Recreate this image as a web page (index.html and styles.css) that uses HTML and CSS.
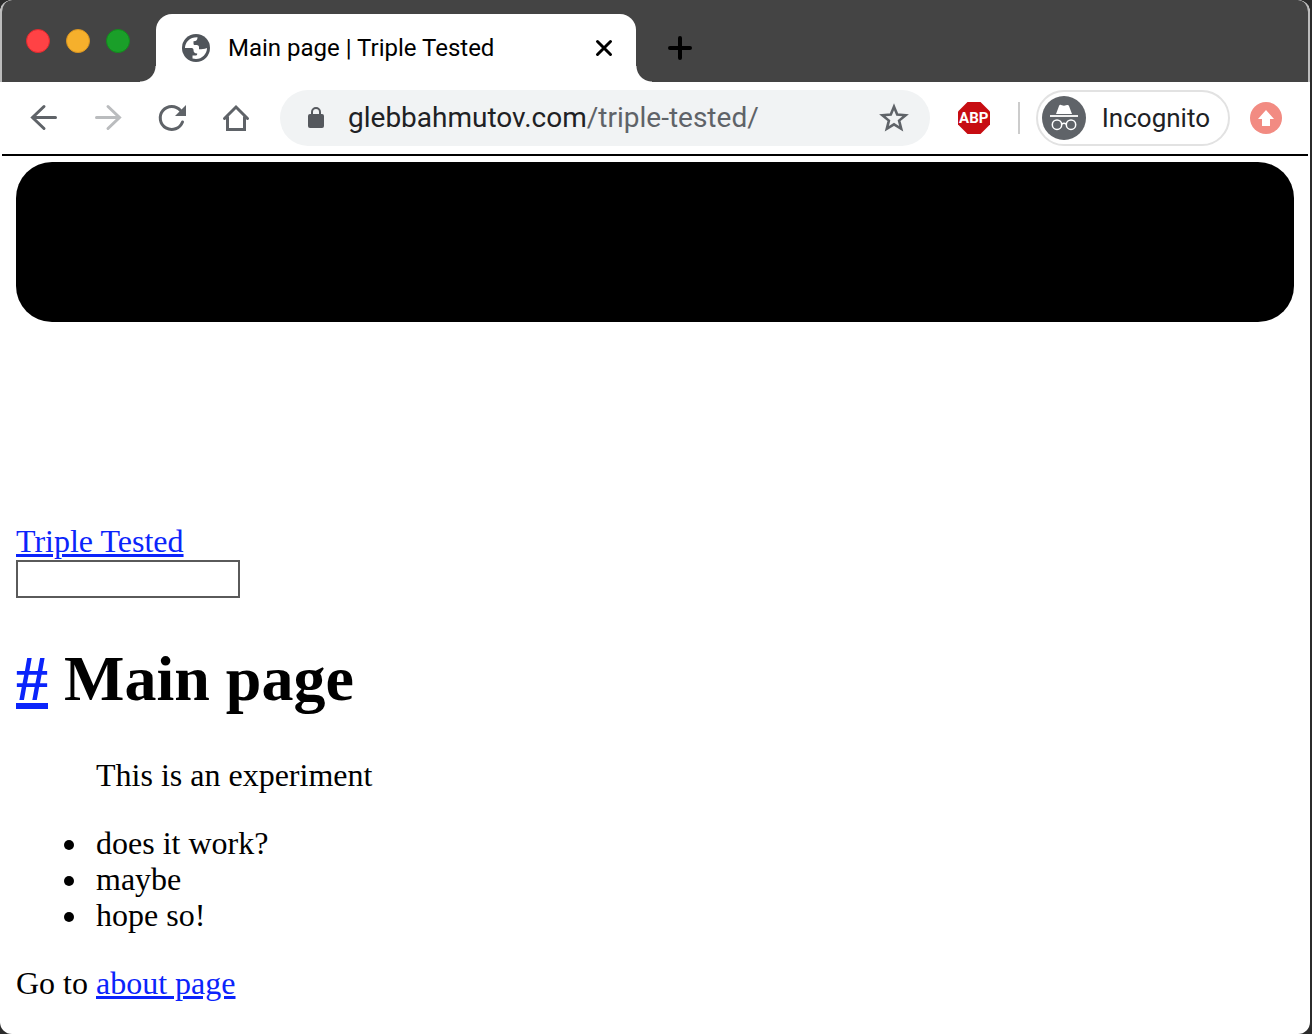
FILE: index.html
```html
<!DOCTYPE html>
<html lang="en">
<head>
<meta charset="utf-8">
<title>Main page | Triple Tested</title>
<link rel="stylesheet" href="styles.css">
</head>
<body>
<div class="window">
  <header class="tab-strip">
    <div class="lights">
      <button class="light light-close" aria-label="Close window"></button>
      <button class="light light-minimize" aria-label="Minimize window"></button>
      <button class="light light-zoom" aria-label="Zoom window"></button>
    </div>
    <div class="tab">
      <svg class="favicon" viewBox="0 0 28 28" aria-hidden="true">
        <circle cx="14" cy="14" r="14" fill="#50555b"/>
        <path fill="#fff" d="M3 14C3 8 8 3 15.500 3.200C15.500 6 14.500 7 11.500 7.300V9.500C11.500 10.500 12 11 13 11H14.500C16.500 11 17 12 17 13.500V15.200C20 15.200 22 15.200 25 14C25 20 20 25 14 25L10.500 24.500V21.500H14C15 21.500 15.200 20.500 15.200 19.500C12.500 19.500 11.500 18 11.500 16C11.500 14.500 10.500 14 9 14Z"/>
      </svg>
      <span class="tab-title">Main page | Triple Tested</span>
      <button class="tab-close" aria-label="Close tab">
        <svg viewBox="0 0 20 20"><path d="M3.500 3.500l13 13m0-13l-13 13" fill="none" stroke="#000" stroke-width="3" stroke-linecap="round"/></svg>
      </button>
    </div>
    <button class="new-tab" aria-label="New tab">
      <svg viewBox="0 0 24 24"><path d="M12 2v20M2 12h20" fill="none" stroke="#000" stroke-width="4" stroke-linecap="round"/></svg>
    </button>
  </header>

  <nav class="toolbar" aria-label="Browser toolbar">
    <div class="nav-buttons">
      <button class="icon-button" aria-label="Back">
        <svg viewBox="0 0 32 32"><path d="M27.500 15.500H5M16 4.500l-11.500 11 11.500 11" fill="none" stroke="#5f6368" stroke-width="3" stroke-linecap="round" stroke-linejoin="miter"/></svg>
      </button>
      <button class="icon-button" aria-label="Forward">
        <svg viewBox="0 0 32 32"><path d="M4.500 15.500H27M16 4.500l11.500 11-11.500 11" fill="none" stroke="#babcbe" stroke-width="3" stroke-linecap="round"/></svg>
      </button>
      <button class="icon-button" aria-label="Reload">
        <svg viewBox="0 0 32 32"><path d="M26.500 20A11.500 11.500 0 1 1 24.500 8.500" fill="none" stroke="#5f6368" stroke-width="3" stroke-linecap="round"/><path d="M30 3v11H19z" fill="#5f6368"/></svg>
      </button>
      <button class="icon-button" aria-label="Home">
        <svg viewBox="0 0 32 32"><path d="M4.500 16.500L16 5l11.500 11.500M7.500 15v12.500h17V15" fill="none" stroke="#5f6368" stroke-width="3" stroke-linecap="round"/></svg>
      </button>
    </div>
    <div class="omnibox">
      <svg class="lock" viewBox="0 0 16 22" aria-hidden="true"><rect y="7" width="16" height="14" rx="2" fill="#55585d"/><path d="M4 8V5a4 4 0 0 1 8 0v3" fill="none" stroke="#55585d" stroke-width="2"/></svg>
      <div class="url" role="textbox" contenteditable="true" spellcheck="false" aria-label="Address">glebbahmutov.com<span class="url-path">/triple-tested/</span></div>
      <button class="bookmark" aria-label="Bookmark this page">
        <svg viewBox="0 0 32 32"><path d="M16 4.800l3.200 7.800 8.400.6-6.500 5.400 2.100 8.200-7.200-4.500-7.200 4.500 2.100-8.200-6.500-5.400 8.400-.6z" fill="none" stroke="#5f6368" stroke-width="2.600"/></svg>
      </button>
    </div>
    <button class="extension" aria-label="Adblock Plus">
      <svg viewBox="0 0 32 32"><path d="M9.500 0h13L32 9.500v13L22.500 32h-13L0 22.500v-13z" fill="#c70d12"/></svg>
      <span class="extension-label">ABP</span>
    </button>
    <span class="divider"></span>
    <button class="profile">
      <svg viewBox="0 0 44 44" aria-hidden="true">
        <circle cx="22" cy="22" r="22" fill="#5f6368"/>
        <path d="M14 18l3-8c.4-1 1-1.400 2-1l3 .8 3-.8c1-.3 1.700 0 2 1l3 8z" fill="#fff"/>
        <path d="M8 20h28" stroke="#fff" stroke-width="1.800"/>
        <g fill="none" stroke="#fff" stroke-width="1.500"><circle cx="15" cy="28.700" r="4.700"/><circle cx="29" cy="28.700" r="4.700"/><path d="M19.700 28.200c1.200-1 3.400-1 4.600 0"/></g>
      </svg>
      Incognito
    </button>
    <button class="update" aria-label="Update available">
      <svg viewBox="0 0 32 32"><circle cx="16" cy="16" r="16" fill="#f28b82"/><path d="M16 8l8 9h-4v7h-8v-7H8z" fill="#fff"/></svg>
    </button>
  </nav>

  <main class="page">
    <div class="banner"></div>
    <a class="site-link" href="#home">Triple Tested</a>
    <input class="search" type="text" aria-label="Search">
    <h1 class="heading" id="main-page"><a class="anchor" href="#main-page">#</a> Main page</h1>
    <p class="intro">This is an experiment</p>
    <ul class="list">
      <li>does it work?</li>
      <li>maybe</li>
      <li>hope so!</li>
    </ul>
    <p class="more">Go to <a href="#about">about page</a></p>
  </main>
</div>
</body>
</html>
```
FILE: styles.css
```css
* {
  box-sizing: border-box;
}

body {
  margin: 0;
  background: #2b2b2b;
}

button {
  padding: 0;
  border: 0;
  background: none;
  font: inherit;
  color: inherit;
}

svg {
  display: block;
}

.window {
  min-height: 100vh;
  margin-right: 2px;
  background: #fff;
  border-radius: 12px;
  overflow: hidden;
}

.tab-strip {
  display: flex;
  align-items: flex-end;
  height: 82px;
  border: solid #bdbdbd;
  border-width: 0 2px;
  border-radius: 12px 12px 0 0;
  background: #444;
}

.lights {
  display: flex;
  gap: 16px;
  width: 154px;
  padding: 0 0 29px 24px;
}

.light {
  width: 24px;
  height: 24px;
  border: 1px solid;
  border-radius: 50%;
}

.light-close {
  background: #ff4245;
  border-color: #e0282d;
}

.light-minimize {
  background: #f6b02c;
  border-color: #d99420;
}

.light-zoom {
  background: #1a9f29;
  border-color: #128a1c;
}

.tab {
  position: relative;
  display: flex;
  align-items: center;
  width: 480px;
  height: 68px;
  padding: 0 22px 0 26px;
  border-radius: 16px 16px 0 0;
  background: #fff;
  font: 24px/32px Roboto, sans-serif;
}

.tab::before,
.tab::after {
  content: "";
  position: absolute;
  bottom: 0;
  width: 16px;
  height: 16px;
}

.tab::before {
  right: 100%;
  background: radial-gradient(circle at 0 0, transparent 15px, #fff 16px);
}

.tab::after {
  left: 100%;
  background: radial-gradient(circle at 100% 0, transparent 15px, #fff 16px);
}

.favicon {
  width: 28px;
  height: 28px;
  margin-right: 18px;
}

.tab-title {
  flex: 1;
  white-space: nowrap;
}

.tab-close {
  width: 20px;
  height: 20px;
}

.new-tab {
  width: 24px;
  height: 24px;
  margin: 0 0 22px 32px;
}

.toolbar {
  display: flex;
  align-items: center;
  height: 74px;
  margin: 0 2px;
  padding: 0 26px;
  border-bottom: 2px solid #000;
  font: 26px/32px Roboto, sans-serif;
}

.nav-buttons {
  display: flex;
  gap: 32px;
  margin-right: 28px;
}

.icon-button,
.bookmark,
.update,
.extension {
  width: 32px;
  height: 32px;
}

.omnibox {
  display: flex;
  flex: 1;
  align-items: center;
  height: 56px;
  padding: 0 20px 0 28px;
  border-radius: 28px;
  background: #f1f3f4;
}

.lock {
  width: 16px;
  height: 22px;
  margin-right: 24px;
}

.url {
  flex: 1;
  font-size: 28px;
  color: #202124;
  white-space: nowrap;
}

.url-path {
  color: #5f6368;
}

.extension {
  display: grid;
  place-items: center;
  margin: 0 28px;
}

.extension > * {
  grid-area: 1 / 1;
}

.extension-label {
  color: #fff;
  font: bold 15px/32px Roboto, sans-serif;
}

.divider {
  width: 2px;
  height: 32px;
  background: #ccc;
}

.profile {
  display: flex;
  align-items: center;
  gap: 16px;
  height: 56px;
  margin: 0 20px 0 16px;
  padding: 0 18px 0 4px;
  border: 2px solid #e2e2e2;
  border-radius: 28px;
  color: #202124;
}

.profile svg {
  width: 44px;
  height: 44px;
}

.page {
  padding: 6px 16px 14px;
  font: 32px/36px "Liberation Serif", serif;
  color: #000;
}

.page a {
  color: #0b24fb;
}

.banner {
  height: 160px;
  margin-bottom: 201px;
  border-radius: 36px;
  background: #000;
}

.site-link {
  display: block;
  width: fit-content;
}

.search {
  display: block;
  width: 224px;
  height: 38px;
  margin-top: 1px;
  border: 2px solid #5a5a5a;
  background: #fff;
}

.heading {
  margin: 45px 0 42px;
  font-size: 64px;
  line-height: 72px;
}

.anchor {
  text-decoration-thickness: 6px;
}

.intro {
  margin: 0 80px;
}

.list {
  margin: 32px 0;
  padding-left: 74px;
}

.list li {
  padding-left: 6px;
}

.more {
  margin: 0;
}
```
